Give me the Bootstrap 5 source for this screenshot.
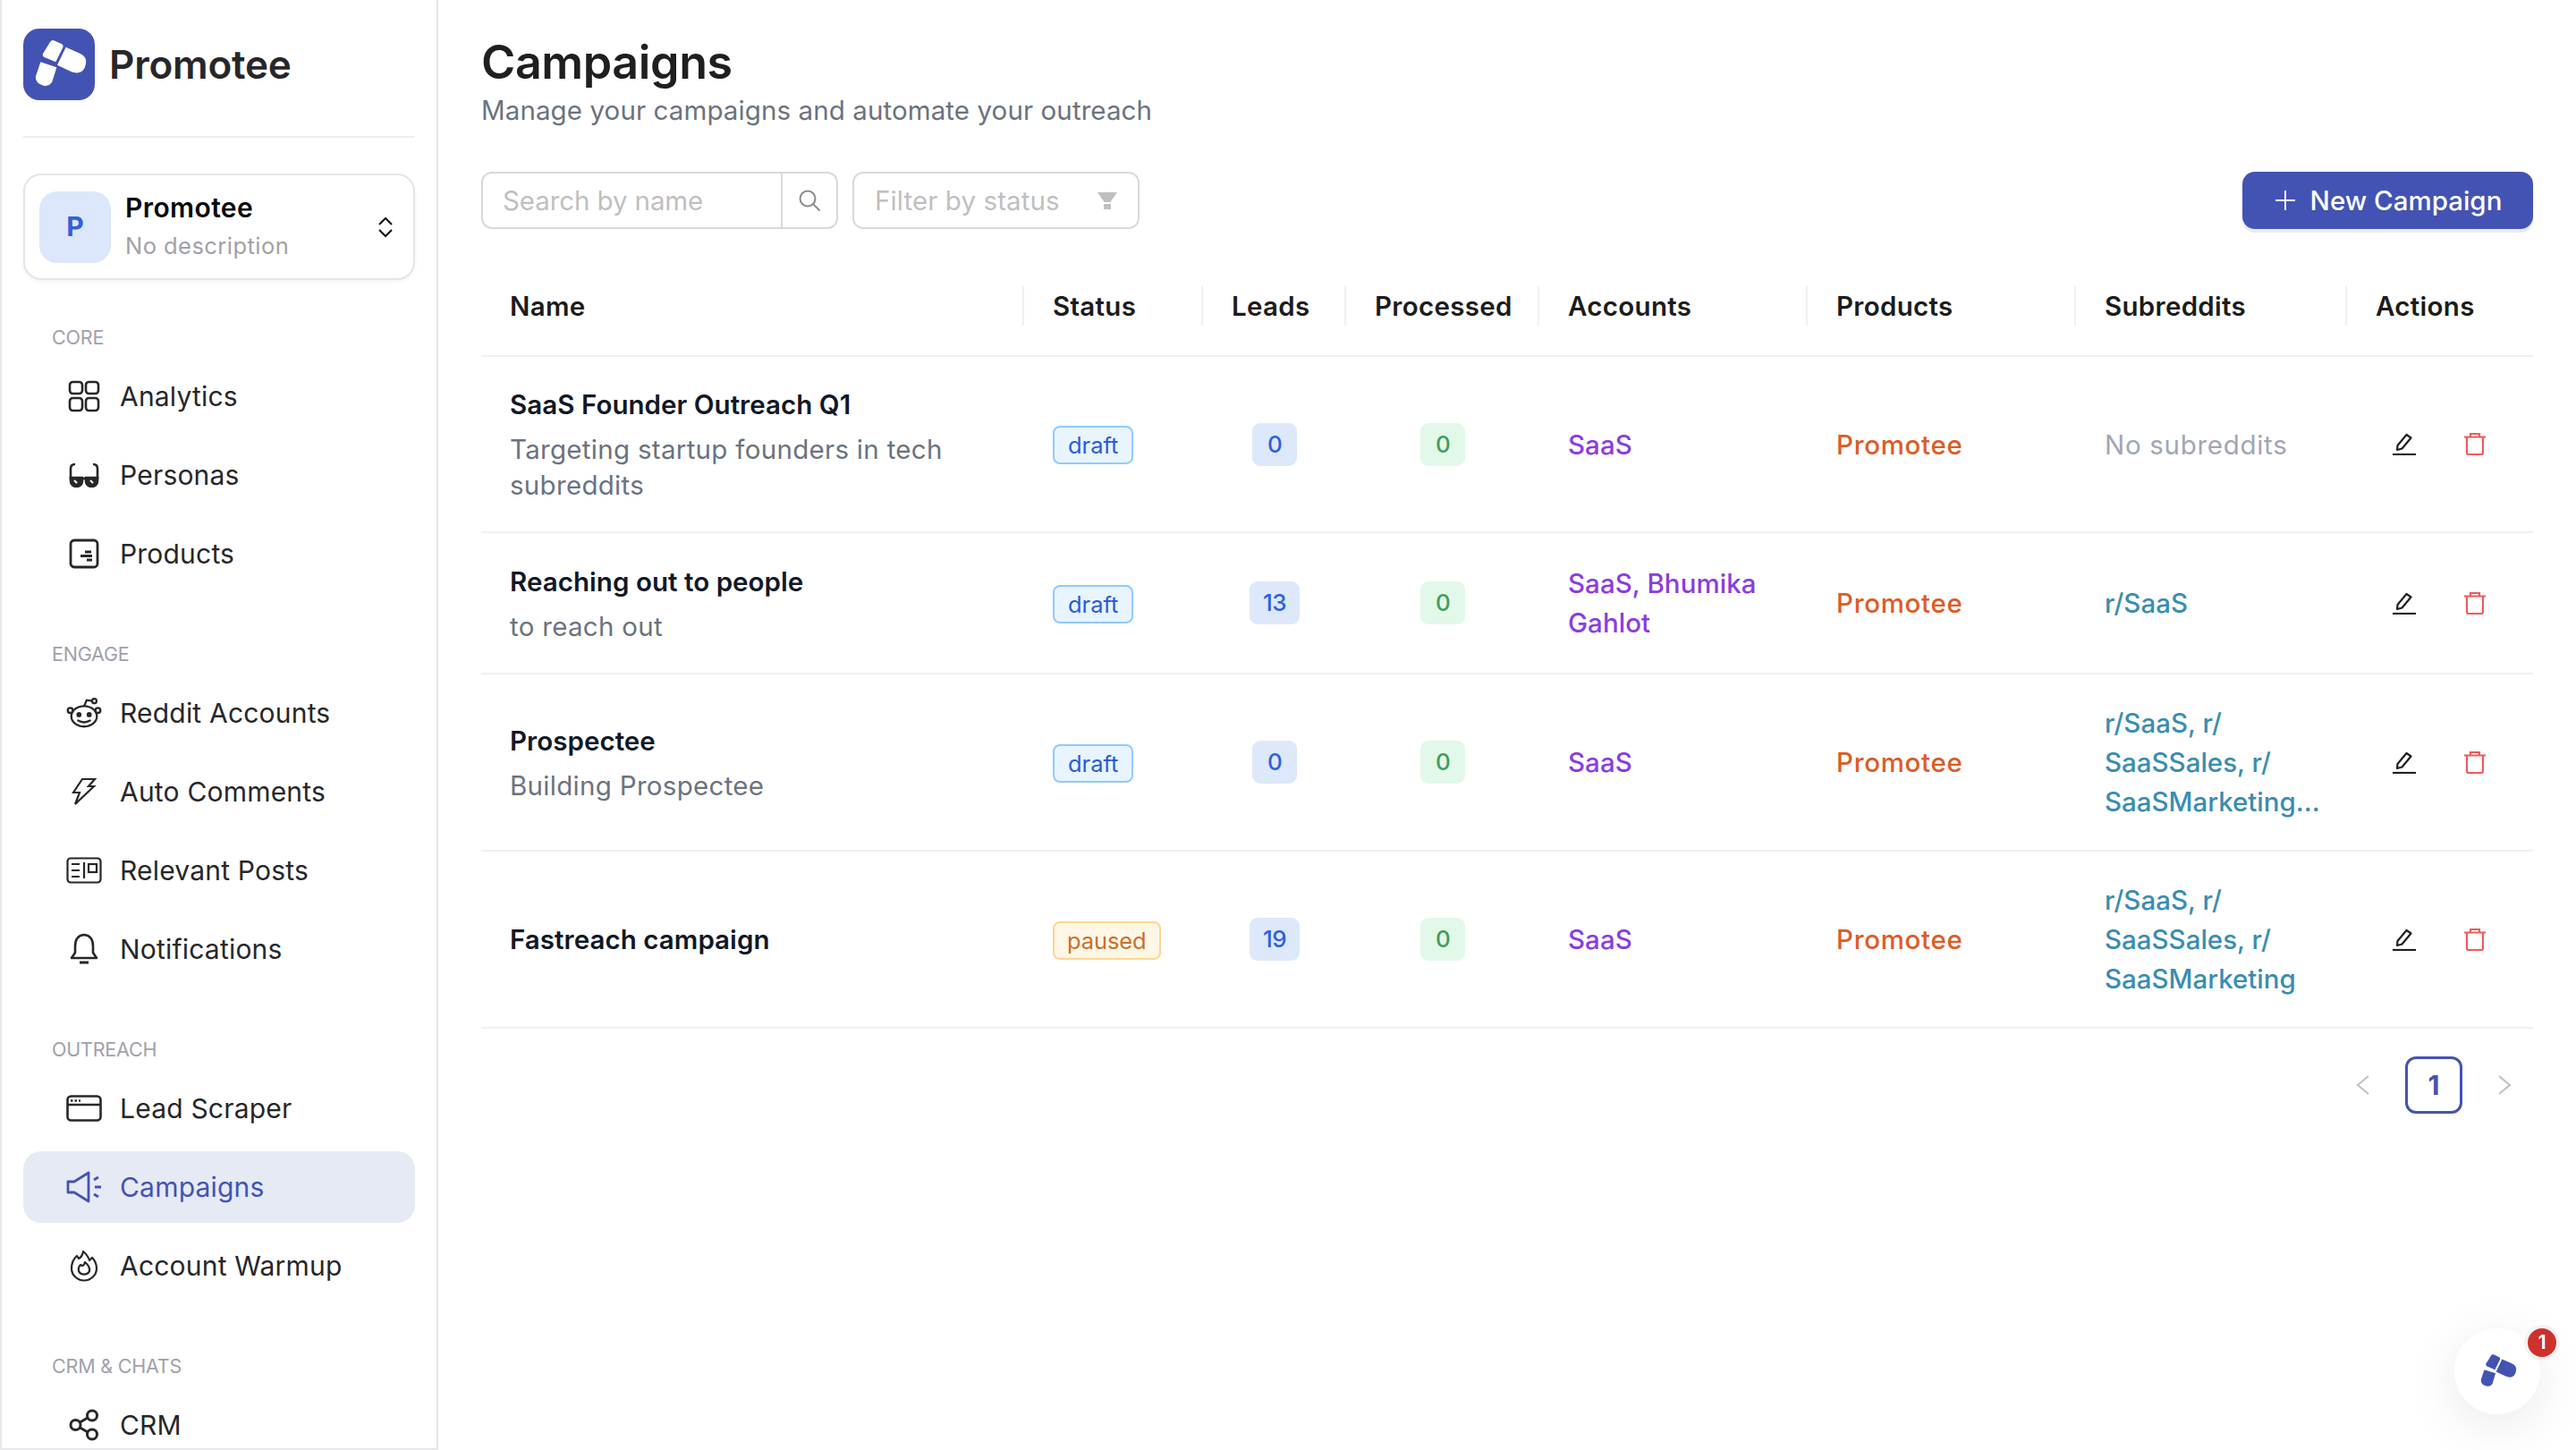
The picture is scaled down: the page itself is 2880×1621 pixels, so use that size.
<!DOCTYPE html>
<html lang="en">
<head>
<meta charset="utf-8">
<title>Campaigns</title>
<link href="https://cdn.jsdelivr.net/npm/bootstrap@5.3.0/dist/css/bootstrap.min.css" rel="stylesheet">
<style>
html,body{height:1621px;overflow:hidden;background:#fff}
body{font-family:"Inter","Liberation Sans",sans-serif;font-size:30px;color:#27272a}
.shell{height:1621px}
.side{width:490px;flex:none;height:1621px;overflow:hidden;border:2px solid #e6e6ec;border-top:0;padding:32px 24px 0 24px}
.brand-mark{width:80px;height:80px;border-radius:18px;background:#4353b3;color:#fff;flex:none}
.brand-name{font-size:44px;font-weight:600;color:#27272a;margin-left:16px;letter-spacing:-.2px}
.side-rule{height:2px;background:#ededf0;margin:40px 0}
.ws-card{height:119px;border:2px solid #e4e4e9;border-radius:20px;box-shadow:0 2px 4px rgba(0,0,0,.05);padding:0 22px 0 16px}
.ws-avatar{width:80px;height:80px;border-radius:20px;background:#dce7fb;color:#2f5fe0;font-size:30px;font-weight:700;flex:none}
.ws-title{font-size:30px;font-weight:600;color:#09090b;line-height:40px;letter-spacing:.4px}
.ws-sub{font-size:25.5px;color:#a1a1aa;line-height:40px;margin-top:3px;letter-spacing:.45px}
.sec-label{font-size:21.5px;color:#a1a1aa;height:30px;line-height:30px;padding-left:32px;margin-top:49px;margin-bottom:11px;letter-spacing:-.2px}
.side-link{height:80px;border-radius:20px;padding:0 0 0 48px;color:#27272a;font-size:30px;margin-bottom:8px;letter-spacing:.2px}
.side-link:hover{color:#27272a}
.side-link.on,.side-link.on:hover{background:#e6eaf4;color:#4353b3}
.side-ico{width:40px;margin-right:20px;flex:none}
.main-pane{padding:34px 48px 0 48px;min-width:0}
.page-title{font-size:52px;font-weight:600;line-height:72px;color:#1f1f1f;margin:0;letter-spacing:-.4px}
.page-sub{font-size:29.5px;line-height:40px;color:#6b7280;margin:-3px 0 0;letter-spacing:.1px}
.tools{margin-top:49px;margin-bottom:31px}
.search-box{width:399px;height:64px;flex-wrap:nowrap}
.search-box .form-control{height:64px;border:2px solid #d9d9d9;border-radius:12px 0 0 12px;font-size:29.5px;padding:0 22px;letter-spacing:-.1px}
.search-box .form-control::placeholder{color:#bfbfbf}
.search-btn{width:62px;border:2px solid #d9d9d9;border-left:0;border-radius:0 12px 12px 0;background:#fff;color:#8c8c8c;padding:0;margin-left:0!important}
.filter-box{width:321px;height:64px;border:2px solid #d9d9d9;border-radius:12px;padding:0 23px;color:#bfbfbf;font-size:29.5px;margin-left:16px;letter-spacing:.1px}
.new-btn,.new-btn:hover{width:325px;height:64px;border-radius:14px;background:#4353b3;border:0;color:#fff;font-size:29.5px;font-weight:500;box-shadow:0 4px 0 #e6ebf5;padding:0 0 0 1px}
.camp-table{table-layout:fixed;width:2294px;margin:0;--bs-table-border-color:#f0f0f2;--bs-table-color:#27272a}
.camp-table>thead th{font-weight:600;color:#1c1c1c;font-size:29.5px;line-height:44px;padding:33px 0 33px 32px;position:relative;border-bottom-width:2px;letter-spacing:.3px}
.camp-table>thead th:not(:last-child)::after{content:"";position:absolute;right:0;top:33px;height:44px;width:2px;background:#f0f0f2}
.camp-table>tbody td{padding:32px;line-height:44px;border-bottom-width:2px;font-size:29.5px;vertical-align:middle}
.camp-table>tbody td.cc{text-align:center;padding-left:0;padding-right:0}
.camp-table>tbody td.acts{padding:0 32px}
.tall-row{height:158px}
.row-title{font-weight:600;color:#111827;line-height:43px;letter-spacing:.05px}
.row-desc{color:#6b7280;line-height:40px;margin-top:8px;letter-spacing:.3px}
.st-tag{display:inline-block;font-size:25.5px;line-height:39px;padding:0 14px;border-radius:8px;border:2px solid;margin-top:-2px;vertical-align:middle}
.st-draft{background:#e8f4ff;border-color:#91caff;color:#2a5bd7;padding:0 15px}
.st-paused{background:#fff7e6;border-color:#ffd591;color:#c8702a;letter-spacing:-.1px}
.cnt{display:inline-block;font-size:26px;font-weight:500;line-height:48px;padding:0 15px;min-width:50px;border-radius:9px;vertical-align:middle;letter-spacing:-.6px}
.cnt-blue{background:#dde8fb;color:#2f5fe0}
.cnt-green{background:#e2f8e9;color:#3f9e5a}
.t-acc{color:#8b3ce0;font-weight:500;letter-spacing:.05px}
.t-prod{color:#dc5c26;font-weight:500;letter-spacing:.7px}
.t-sub{color:#3a8db0;font-weight:500}
.t-none{color:#a1a6b4;letter-spacing:.7px}
.act-edit{color:#1f1f1f;margin-left:19px;flex:none}
.act-del{color:#ef5a5a;margin-left:54px;flex:none}
.pager{margin:31px 0 0;gap:16px}
.pager .page-link{width:64px;height:64px;padding:0;border:0;background:none;color:#c4c4c4;display:flex;align-items:center;justify-content:center}
.pager .page-item.active .page-link{border:3px solid #4353b3;border-radius:12px;background:#fff;color:#4353b3;font-weight:700;font-size:30px}
.fab{position:fixed;left:2744px;top:1485px;width:96px;height:96px;border-radius:50%;background:#fff;color:#4353b3;box-shadow:0 12px 60px rgba(0,0,0,.09)}
.fab-badge{position:absolute;left:82px;top:0;width:32px;height:32px;border-radius:50%;background:#cf302b;color:#fff;font-size:21px;font-weight:700;box-shadow:0 0 0 4px rgba(240,240,240,.8)}
</style>
</head>
<body>
<svg width="0" height="0" class="position-absolute">
  <symbol id="pmark" viewBox="0 0 240 240">
    <path fill="currentColor" d="M103 40 L128 51 Q136 55 133 63 L109 112 L71 96 Q63 92 66 84 L90 45 Q95 37 103 40Z"/>
    <path fill="currentColor" d="M58 112 L112 130 L97 178 Q88 195 68 191 Q39 184 42 160Z"/>
    <path fill="currentColor" d="M143 62 L190 83 Q214 94 210 118 Q204 152 174 148 Q166 147 160 144 L114 122Z"/>
  </symbol>
  <symbol id="ic-edit" viewBox="0 0 26 25">
    <path fill="none" stroke="currentColor" stroke-width="2.2" stroke-linejoin="round" d="M5 19 L5.5 14 L15.5 2 L20.5 5.5 L10.5 17.5Z"/>
    <path stroke="currentColor" stroke-width="2.2" d="M0 24 H26"/>
  </symbol>
  <symbol id="ic-del" viewBox="0 0 24 25">
    <path fill="none" stroke="currentColor" stroke-width="2.2" d="M0 4.5 H24M7 4.5 V1 H17 V4.5M3 4.5 V22 Q3 24 5 24 H19 Q21 24 21 22 V4.5"/>
  </symbol>
</svg>
<div class="shell d-flex">
  <aside class="side">
    <div class="d-flex align-items-center">
      <div class="brand-mark d-flex align-items-center justify-content-center"><svg width="80" height="80"><use href="#pmark"/></svg></div>
      <div class="brand-name">Promotee</div>
    </div>
    <div class="side-rule"></div>
    <div class="ws-card d-flex align-items-center">
      <div class="ws-avatar d-flex align-items-center justify-content-center">P</div>
      <div class="flex-grow-1 ms-3">
        <div class="ws-title">Promotee</div>
        <div class="ws-sub">No description</div>
      </div>
      <svg width="18" height="24" viewBox="0 0 18 24" fill="none" stroke="#111" stroke-width="2"><path d="M2 9 L9 2 L16 9M2 15 L9 22 L16 15"/></svg>
    </div>

    <div class="sec-label">CORE</div>
    <nav class="nav flex-column">
      <a class="nav-link side-link d-flex align-items-center" href="#"><span class="side-ico d-flex justify-content-center">
        <svg width="36" height="36" viewBox="0 0 36 36" fill="none" stroke="#27272a" stroke-width="2.6"><rect x="2" y="2" width="14" height="13" rx="3.5"/><rect x="20" y="2" width="14" height="13" rx="3.5"/><rect x="2" y="20" width="14" height="14" rx="3.5"/><rect x="20" y="20" width="14" height="14" rx="3.5"/></svg>
      </span>Analytics</a>
      <a class="nav-link side-link d-flex align-items-center" href="#"><span class="side-ico d-flex justify-content-center">
        <svg width="34" height="28" viewBox="0 0 34 28" fill="none" stroke="#27272a" stroke-width="2.6"><path d="M7 2 Q2 2 2 7 V19M27 2 Q32 2 32 7 V19"/><path fill="#27272a" d="M2 17 H15 V21 A6.5 6 0 0 1 2 21Z"/><path fill="#27272a" d="M19 17 H32 V21 A6.5 6 0 0 1 19 21Z"/><path d="M15 18 H19"/><path stroke="#fff" stroke-width="2" d="M6 20 L9 23M24 20 L27 23"/></svg>
      </span>Personas</a>
      <a class="nav-link side-link d-flex align-items-center" href="#"><span class="side-ico d-flex justify-content-center">
        <svg width="34" height="34" viewBox="0 0 34 34" fill="none" stroke="#27272a" stroke-width="2.8"><rect x="2" y="2" width="30" height="30" rx="4"/><path d="M18 15 H25M13 19.5 H26M20 24 H26"/></svg>
      </span>Products</a>
    </nav>

    <div class="sec-label">ENGAGE</div>
    <nav class="nav flex-column">
      <a class="nav-link side-link d-flex align-items-center" href="#"><span class="side-ico d-flex justify-content-center">
        <svg width="42" height="36" viewBox="0 0 42 36" fill="none" stroke="#27272a" stroke-width="2.4"><ellipse cx="21" cy="22" rx="15" ry="12"/><circle cx="4.8" cy="15" r="3"/><circle cx="37.2" cy="15" r="3"/><circle cx="33" cy="4" r="2.6"/><path d="M21 10 L24 3 L30.5 4"/><circle cx="15" cy="20" r="1.8" fill="#27272a"/><circle cx="27" cy="20" r="1.8" fill="#27272a"/><path d="M14 27 Q21 31 28 27" stroke-linecap="round"/></svg>
      </span>Reddit Accounts</a>
      <a class="nav-link side-link d-flex align-items-center" href="#"><span class="side-ico d-flex justify-content-center">
        <svg width="28" height="32" viewBox="0 0 28 32" fill="none" stroke="#27272a" stroke-width="2.2" stroke-linejoin="miter"><path d="M12 2 H26 L19 10 H25 L4 30 L9 17 H2Z"/></svg>
      </span>Auto Comments</a>
      <a class="nav-link side-link d-flex align-items-center" href="#"><span class="side-ico d-flex justify-content-center">
        <svg width="40" height="30" viewBox="0 0 40 30" fill="none" stroke="#27272a" stroke-width="2.2"><rect x="1.5" y="1.5" width="37" height="27" rx="3.5"/><path d="M6 8 H15M6 15 H15M6 22 H15M20 6 V24"/><rect x="25" y="8" width="9" height="9"/></svg>
      </span>Relevant Posts</a>
      <a class="nav-link side-link d-flex align-items-center" href="#"><span class="side-ico d-flex justify-content-center">
        <svg width="32" height="36" viewBox="0 0 32 36" fill="none" stroke="#27272a" stroke-width="2.6" stroke-linejoin="round"><path d="M16 2 Q26 3 26 15 V22 L30 28 H2 L6 22 V15 Q6 3 16 2Z"/><path d="M11 33 H21" stroke-width="3"/></svg>
      </span>Notifications</a>
    </nav>

    <div class="sec-label">OUTREACH</div>
    <nav class="nav flex-column">
      <a class="nav-link side-link d-flex align-items-center" href="#"><span class="side-ico d-flex justify-content-center">
        <svg width="40" height="30" viewBox="0 0 40 30" fill="none" stroke="#27272a" stroke-width="2.6"><rect x="1.5" y="1.5" width="37" height="27" rx="4"/><path d="M2 11 H38"/><path stroke-dasharray="2.5 2" stroke-width="2.5" d="M5 6.5 H16"/></svg>
      </span>Lead Scraper</a>
      <a class="nav-link side-link on d-flex align-items-center" href="#"><span class="side-ico d-flex justify-content-center">
        <svg width="40" height="36" viewBox="0 0 40 36" fill="none" stroke="#4353b3" stroke-width="2.8" stroke-linejoin="round"><path d="M2 12 H9 L25 2 V34 L9 24 H2Z"/><path d="M31 10 L36 7M32 18 H39M31 26 L36 29"/></svg>
      </span>Campaigns</a>
      <a class="nav-link side-link d-flex align-items-center" href="#"><span class="side-ico d-flex justify-content-center">
        <svg width="32" height="36" viewBox="0 0 32 36" fill="none" stroke="#27272a" stroke-width="2.2" stroke-linejoin="round"><path d="M15 2 Q14 8 10 10 L8 7 Q2 12 2 21 A14 13.5 0 0 0 30 21 Q30 14 25 9 L22 12 Q20 6 15 2Z"/><path d="M17 14 Q16 18 14 18 L12 17 Q9 20 10 24 A6.5 6 0 0 0 22 24 Q23 19 17 14Z"/></svg>
      </span>Account Warmup</a>
    </nav>

    <div class="sec-label">CRM &amp; CHATS</div>
    <nav class="nav flex-column">
      <a class="nav-link side-link d-flex align-items-center" href="#"><span class="side-ico d-flex justify-content-center">
        <svg width="34" height="36" viewBox="0 0 34 36" fill="none" stroke="#27272a" stroke-width="3"><circle cx="7.5" cy="18" r="5.5"/><circle cx="26" cy="7.5" r="5.5"/><circle cx="26" cy="28.5" r="5.5"/><path d="M12.5 15 L21 10M12.5 21 L21 26"/></svg>
      </span>CRM</a>
    </nav>
  </aside>

  <main class="main-pane flex-grow-1">
    <h1 class="page-title">Campaigns</h1>
    <p class="page-sub">Manage your campaigns and automate your outreach</p>

    <div class="tools d-flex align-items-center justify-content-between">
      <div class="d-flex align-items-center">
        <div class="input-group search-box">
          <input class="form-control" type="text" placeholder="Search by name">
          <button class="btn search-btn d-flex align-items-center justify-content-center" type="button" aria-label="Search">
            <svg width="26" height="26" viewBox="0 0 26 26" fill="none" stroke="#8c8c8c" stroke-width="2"><circle cx="11" cy="11" r="8.5"/><path d="M17 17 L24.5 24.5"/></svg>
          </button>
        </div>
        <div class="filter-box d-flex align-items-center justify-content-between">
          <span>Filter by status</span>
          <svg width="22" height="22" viewBox="0 0 22 22"><path fill="#bfbfbf" d="M0 2 H22 L15 12 V13 H7 V12Z"/><rect x="7" y="15" width="8" height="6" fill="#bfbfbf"/></svg>
        </div>
      </div>
      <button class="btn new-btn d-flex align-items-center justify-content-center" type="button">
        <svg width="24" height="24" viewBox="0 0 24 24" stroke="#fff" stroke-width="2" class="me-3"><path d="M12 1 V23M1 12 H23"/></svg>New Campaign
      </button>
    </div>

    <table class="table camp-table">
      <colgroup><col style="width:607px"><col style="width:200px"><col style="width:160px"><col style="width:216px"><col style="width:300px"><col style="width:300px"><col style="width:303px"><col style="width:208px"></colgroup>
      <thead>
        <tr><th>Name</th><th>Status</th><th>Leads</th><th>Processed</th><th>Accounts</th><th>Products</th><th>Subreddits</th><th>Actions</th></tr>
      </thead>
      <tbody>
        <tr>
          <td><div class="row-title">SaaS Founder Outreach Q1</div><div class="row-desc">Targeting startup founders in tech<br>subreddits</div></td>
          <td><span class="st-tag st-draft">draft</span></td>
          <td class="cc"><span class="cnt cnt-blue">0</span></td>
          <td class="cc"><span class="cnt cnt-green">0</span></td>
          <td class="t-acc">SaaS</td><td class="t-prod">Promotee</td><td class="t-none">No subreddits</td>
          <td class="acts"><div class="d-flex align-items-center"><svg class="act-edit" width="26" height="25"><use href="#ic-edit"/></svg><svg class="act-del" width="24" height="25"><use href="#ic-del"/></svg></div></td>
        </tr>
        <tr class="tall-row">
          <td><div class="row-title">Reaching out to people</div><div class="row-desc">to reach out</div></td>
          <td><span class="st-tag st-draft">draft</span></td>
          <td class="cc"><span class="cnt cnt-blue">13</span></td>
          <td class="cc"><span class="cnt cnt-green">0</span></td>
          <td class="t-acc">SaaS, Bhumika<br>Gahlot</td><td class="t-prod">Promotee</td><td class="t-sub">r/SaaS</td>
          <td class="acts"><div class="d-flex align-items-center"><svg class="act-edit" width="26" height="25"><use href="#ic-edit"/></svg><svg class="act-del" width="24" height="25"><use href="#ic-del"/></svg></div></td>
        </tr>
        <tr>
          <td><div class="row-title">Prospectee</div><div class="row-desc">Building Prospectee</div></td>
          <td><span class="st-tag st-draft">draft</span></td>
          <td class="cc"><span class="cnt cnt-blue">0</span></td>
          <td class="cc"><span class="cnt cnt-green">0</span></td>
          <td class="t-acc">SaaS</td><td class="t-prod">Promotee</td><td class="t-sub">r/SaaS, r/<br>SaaSSales, r/<br>SaaSMarketing...</td>
          <td class="acts"><div class="d-flex align-items-center"><svg class="act-edit" width="26" height="25"><use href="#ic-edit"/></svg><svg class="act-del" width="24" height="25"><use href="#ic-del"/></svg></div></td>
        </tr>
        <tr>
          <td><div class="row-title">Fastreach campaign</div></td>
          <td><span class="st-tag st-paused">paused</span></td>
          <td class="cc"><span class="cnt cnt-blue">19</span></td>
          <td class="cc"><span class="cnt cnt-green">0</span></td>
          <td class="t-acc">SaaS</td><td class="t-prod">Promotee</td><td class="t-sub">r/SaaS, r/<br>SaaSSales, r/<br>SaaSMarketing</td>
          <td class="acts"><div class="d-flex align-items-center"><svg class="act-edit" width="26" height="25"><use href="#ic-edit"/></svg><svg class="act-del" width="24" height="25"><use href="#ic-del"/></svg></div></td>
        </tr>
      </tbody>
    </table>

    <ul class="pagination pager justify-content-end">
      <li class="page-item"><a class="page-link" href="#" aria-label="Previous"><svg width="16" height="24" viewBox="0 0 16 24" fill="none" stroke="currentColor" stroke-width="2.2"><path d="M14 2 L2 12 L14 22"/></svg></a></li>
      <li class="page-item active"><a class="page-link" href="#">1</a></li>
      <li class="page-item"><a class="page-link" href="#" aria-label="Next"><svg width="16" height="24" viewBox="0 0 16 24" fill="none" stroke="currentColor" stroke-width="2.2"><path d="M2 2 L14 12 L2 22"/></svg></a></li>
    </ul>
  </main>
</div>
<div class="fab d-flex align-items-center justify-content-center">
  <svg width="56" height="56"><use href="#pmark"/></svg>
  <span class="fab-badge d-flex align-items-center justify-content-center">1</span>
</div>
</body>
</html>
